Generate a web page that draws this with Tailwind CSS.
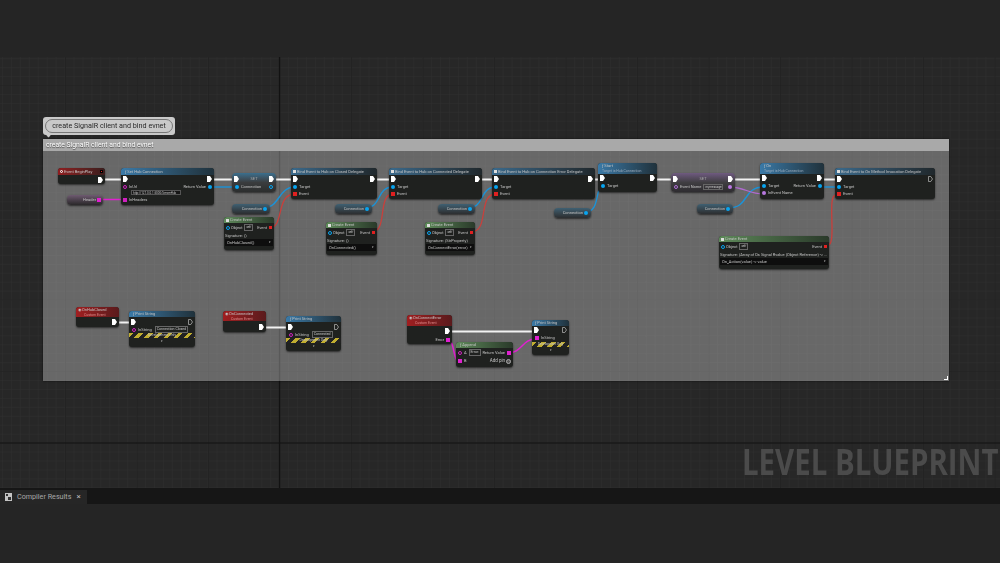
<!DOCTYPE html>
<html lang="en">
	<head>
		<meta charset="UTF-8" />
		<title>Level Blueprint</title>
		<script src="https://cdn.jsdelivr.net/npm/@tailwindcss/browser@4"></script>
	</head>
	<body class="w-[1000px] h-[563px] overflow-hidden bg-[#252525] font-['Roboto',sans-serif] flex flex-col">
		<div class="h-[57px] bg-[#252525]"></div>

		<!-- graph canvas, node coordinates are y-57 from the screenshot -->
		<div class="relative h-[431px] overflow-hidden bg-[#272727] blur-[0.5px]">
			<svg class="absolute inset-0 w-full h-full" viewBox="0 57 1000 431">
				<defs>
					<pattern id="minor" x="2" y="13.5" width="8.94" height="8.94" patternUnits="userSpaceOnUse">
						<path d="M0 0V8.94M0 0H8.94" stroke="#303030" stroke-width="1" fill="none" />
					</pattern>
					<pattern id="major" x="65" y="85" width="71.5" height="71.5" patternUnits="userSpaceOnUse">
						<path d="M0 0V71.5M0 0H71.5" stroke="#1d1d1d" stroke-width="1.2" fill="none" />
					</pattern>
				</defs>
				<rect x="0" y="57" width="1000" height="431" fill="url(#minor)" />
				<rect x="0" y="57" width="1000" height="431" fill="url(#major)" />
				<path d="M279.5 57V488M0 443H1000" stroke="#121212" stroke-width="1.2" />
			</svg>

			<div class="absolute left-[742px] top-[385px] origin-left scale-x-[0.84] whitespace-nowrap font-['Open_Sans',sans-serif] font-bold text-[35px] leading-[40px] text-[#4b4b4b]">LEVEL BLUEPRINT</div>

			<!-- comment -->
			<div class="absolute left-[43px] top-[60px] w-[132px] h-[18px] rounded-[3px] bg-[#c9c9c9] p-[2px]">
				<div class="h-full rounded-full border border-[#777] flex items-center justify-center text-[7.2px] text-[#2a2a2a]">create SignalR client and bind evnet</div>
				<div class="absolute left-[4px] -bottom-[2px] w-[3px] h-[3px] rotate-45 bg-[#c9c9c9]"></div>
			</div>
			<div class="absolute left-[43px] top-[82px] w-[906px] h-[242px] bg-white/30 shadow-[0_0_2px_#000a]">
				<div class="h-[12px] bg-[#a9a9a9] px-[3px] text-[6.8px] leading-[12px] text-white [text-shadow:0_1px_1px_#444]">create SignalR client and bind evnet</div>
				<div class="absolute right-[1px] bottom-[1px] w-[4px] h-[4px] border-r border-b border-white"></div>
			</div>

			<!-- wires -->
			<svg class="absolute inset-0 w-full h-full" viewBox="0 57 1000 431" fill="none">
				<g stroke="#f2f2f2" stroke-width="1.8">
					<path d="M104 179.5H122M214 179.5H233M275 179.5H292M376 179.5H390M481 179.5H493M594 179.5H599M656 179.5H672M734 179.5H761M823 179.5H836" />
					<path d="M118 322.5H130M265 327.5H287M451 331.5H533" />
				</g>
				<g stroke="#1b93d8" stroke-width="1.4">
					<path d="M209 187H238" />
					<path d="M263 208C280 208 278 187 295 187" />
					<path d="M365 208C382 208 376 187 393 187" />
					<path d="M468 208C485 208 479 187 496 187" />
					<path d="M585 212C601 212 594 187 603 187" />
					<path d="M728 208C750 208 742 187 764 187" />
					<path d="M818 187H840" />
				</g>
				<g stroke="#c8403c" stroke-width="1.3">
					<path d="M269 228C285 228 275 194 295 194" />
					<path d="M372 232C388 232 377 194 393 194" />
					<path d="M471 232C490 232 477 194 496 194" />
					<path d="M827 246C838 246 826 195 836 195" />
				</g>
				<g stroke="#e020d0" stroke-width="1.5">
					<path d="M98 199.5H122" />
					<path d="M447 340C456 340 452 362 460 362" />
					<path d="M508 353C522 353 522 339 536 339" />
				</g>
				<path d="M729 187C745 187 748 194 764 194" stroke="#b06ad0" stroke-width="1.3" />
			</svg>

			<!-- Event BeginPlay -->
			<div class="absolute left-[58px] top-[111px] w-[47px] h-[16px] rounded-[3px] bg-[#1f211f] shadow-[0_1px_2px_#0009] overflow-hidden text-[4px] text-[#c4c4c4]">
				<div class="h-[7px] flex items-center justify-between px-[2px] bg-linear-to-r from-[#8f1d20] to-[#3a1d1d]"><span class="flex items-center gap-[1px]"><span class="w-[3px] h-[3px] rounded-full border border-white"></span>Event BeginPlay</span><span class="w-[3px] h-[3px] bg-[#e02020] border-[0.5px] border-black"></span></div>
				<div class="h-[9px] flex items-center justify-end pr-[2px]"><svg class="w-[5px] h-[6px]" viewBox="0 0 5 6"><path d="M0 0h3l2 3-2 3H0z" fill="#fff" /></svg></div>
			</div>

			<!-- Headers getter -->
			<div class="absolute left-[67px] top-[138px] w-[36px] h-[10px] rounded-[4px] bg-linear-to-b from-[#6e5a70] to-[#2a282a] shadow-[0_1px_2px_#0009] flex items-center justify-end gap-[1px] pr-[2px] text-[4px] text-[#c4c4c4]">Header<span class="w-[4px] h-[4px] bg-[#e020d0]"></span></div>

			<!-- Set Hub Connection -->
			<div class="absolute left-[121px] top-[111px] w-[93px] h-[37px] rounded-[3px] bg-[#1f211f] shadow-[0_1px_2px_#0009] overflow-hidden text-[4px] text-[#c4c4c4]">
				<div class="h-[7px] flex items-center px-[4px] bg-linear-to-r from-[#3a7aa8] to-[#20323c]">ƒ Set Hub Connection</div>
				<div class="h-[8px] flex items-center justify-between px-[2px]"><svg class="w-[5px] h-[6px]" viewBox="0 0 5 6"><path d="M0 0h3l2 3-2 3H0z" fill="#fff" /></svg><svg class="w-[5px] h-[6px]" viewBox="0 0 5 6"><path d="M0 0h3l2 3-2 3H0z" fill="#fff" /></svg></div>
				<div class="h-[14px] flex justify-between px-[2px]">
					<div class="flex flex-col pt-[1px]">
						<div class="flex items-center gap-[2px]"><span class="w-[4px] h-[4px] rounded-full border border-[#d020c0]"></span>InUrl</div>
						<div class="ml-[8px] w-[50px] h-[5px] border-[0.5px] border-[#555] bg-[#161616] text-[3px] leading-[4px] px-[1px] whitespace-nowrap">http://127.0.0.1:5000/ServerHub</div>
					</div>
					<div class="flex items-center gap-[2px] self-start pt-[1px]">Return Value<span class="w-[4px] h-[4px] rounded-full bg-[#08a4f0]"></span></div>
				</div>
				<div class="flex items-center gap-[2px] px-[2px]"><span class="w-[4px] h-[4px] bg-[#d020c0]"></span>InHeaders</div>
			</div>

			<!-- SET Connection -->
			<div class="absolute left-[232px] top-[116px] w-[44px] h-[19px] rounded-[4px] bg-linear-to-b from-[#3a6f8e] via-[#3a3c3e] to-[#2c2e2e] shadow-[0_1px_2px_#0009] overflow-hidden text-[4px] text-[#c4c4c4]">
				<div class="h-[10px] flex items-center justify-between px-[2px] pt-[2px]"><svg class="w-[5px] h-[6px]" viewBox="0 0 5 6"><path d="M0 0h3l2 3-2 3H0z" fill="#fff" /></svg><span class="text-[#aaa]">SET</span><svg class="w-[5px] h-[6px]" viewBox="0 0 5 6"><path d="M0 0h3l2 3-2 3H0z" fill="#fff" /></svg></div>
				<div class="h-[7px] flex items-center justify-between px-[3px]"><span class="flex items-center gap-[2px]"><span class="w-[4px] h-[4px] rounded-full bg-[#08a4f0]"></span>Connection</span><span class="w-[4px] h-[4px] rounded-full border border-[#08a4f0]"></span></div>
			</div>

			<!-- Connection getters -->
			<div class="absolute left-[232px] top-[147px] w-[38px] h-[10px] rounded-[4px] bg-linear-to-b from-[#3f6072] to-[#2c2e30] shadow-[0_1px_2px_#0009] flex items-center justify-end gap-[1px] pr-[3px] text-[4px] text-[#c4c4c4]">Connection<span class="w-[4px] h-[4px] rounded-full bg-[#08a4f0]"></span></div>
			<div class="absolute left-[335px] top-[147px] w-[37px] h-[10px] rounded-[4px] bg-linear-to-b from-[#3f6072] to-[#2c2e30] shadow-[0_1px_2px_#0009] flex items-center justify-end gap-[1px] pr-[3px] text-[4px] text-[#c4c4c4]">Connection<span class="w-[4px] h-[4px] rounded-full bg-[#08a4f0]"></span></div>
			<div class="absolute left-[438px] top-[147px] w-[37px] h-[10px] rounded-[4px] bg-linear-to-b from-[#3f6072] to-[#2c2e30] shadow-[0_1px_2px_#0009] flex items-center justify-end gap-[1px] pr-[3px] text-[4px] text-[#c4c4c4]">Connection<span class="w-[4px] h-[4px] rounded-full bg-[#08a4f0]"></span></div>
			<div class="absolute left-[554px] top-[151px] w-[37px] h-[10px] rounded-[4px] bg-linear-to-b from-[#3f6072] to-[#2c2e30] shadow-[0_1px_2px_#0009] flex items-center justify-end gap-[1px] pr-[3px] text-[4px] text-[#c4c4c4]">Connection<span class="w-[4px] h-[4px] rounded-full bg-[#08a4f0]"></span></div>
			<div class="absolute left-[697px] top-[147px] w-[36px] h-[10px] rounded-[4px] bg-linear-to-b from-[#3f6072] to-[#2c2e30] shadow-[0_1px_2px_#0009] flex items-center justify-end gap-[1px] pr-[3px] text-[4px] text-[#c4c4c4]">Connection<span class="w-[4px] h-[4px] rounded-full bg-[#08a4f0]"></span></div>

			<!-- Bind Event nodes -->
			<div class="absolute left-[291px] top-[111px] w-[86px] h-[31px] rounded-[3px] bg-[#1f211f] shadow-[0_1px_2px_#0009] overflow-hidden text-[4px] text-[#c4c4c4]">
				<div class="h-[7px] flex items-center px-[2px] gap-[1px] bg-linear-to-r from-[#3a6a8c] to-[#20282c]"><span class="w-[3px] h-[3px] bg-[#ddd]"></span>Bind Event to Hub on Closed Delegate</div>
				<div class="h-[8px] flex items-center justify-between px-[2px]"><svg class="w-[5px] h-[6px]" viewBox="0 0 5 6"><path d="M0 0h3l2 3-2 3H0z" fill="#fff" /></svg><svg class="w-[5px] h-[6px]" viewBox="0 0 5 6"><path d="M0 0h3l2 3-2 3H0z" fill="#fff" /></svg></div>
				<div class="h-[8px] flex items-center gap-[2px] px-[2px]"><span class="w-[4px] h-[4px] rounded-full bg-[#08a4f0]"></span>Target</div>
				<div class="h-[6px] flex items-center gap-[2px] px-[2px]"><span class="w-[4px] h-[4px] bg-[#e02020]"></span>Event</div>
			</div>
			<div class="absolute left-[389px] top-[111px] w-[93px] h-[31px] rounded-[3px] bg-[#1f211f] shadow-[0_1px_2px_#0009] overflow-hidden text-[4px] text-[#c4c4c4]">
				<div class="h-[7px] flex items-center px-[2px] gap-[1px] bg-linear-to-r from-[#3a6a8c] to-[#20282c]"><span class="w-[3px] h-[3px] bg-[#ddd]"></span>Bind Event to Hub on Connected Delegate</div>
				<div class="h-[8px] flex items-center justify-between px-[2px]"><svg class="w-[5px] h-[6px]" viewBox="0 0 5 6"><path d="M0 0h3l2 3-2 3H0z" fill="#fff" /></svg><svg class="w-[5px] h-[6px]" viewBox="0 0 5 6"><path d="M0 0h3l2 3-2 3H0z" fill="#fff" /></svg></div>
				<div class="h-[8px] flex items-center gap-[2px] px-[2px]"><span class="w-[4px] h-[4px] rounded-full bg-[#08a4f0]"></span>Target</div>
				<div class="h-[6px] flex items-center gap-[2px] px-[2px]"><span class="w-[4px] h-[4px] bg-[#e02020]"></span>Event</div>
			</div>
			<div class="absolute left-[492px] top-[111px] w-[103px] h-[31px] rounded-[3px] bg-[#1f211f] shadow-[0_1px_2px_#0009] overflow-hidden text-[4px] text-[#c4c4c4]">
				<div class="h-[7px] flex items-center px-[2px] gap-[1px] bg-linear-to-r from-[#3a6a8c] to-[#20282c]"><span class="w-[3px] h-[3px] bg-[#ddd]"></span>Bind Event to Hub on Connection Error Delegate</div>
				<div class="h-[8px] flex items-center justify-between px-[2px]"><svg class="w-[5px] h-[6px]" viewBox="0 0 5 6"><path d="M0 0h3l2 3-2 3H0z" fill="#fff" /></svg><svg class="w-[5px] h-[6px]" viewBox="0 0 5 6"><path d="M0 0h3l2 3-2 3H0z" fill="#fff" /></svg></div>
				<div class="h-[8px] flex items-center gap-[2px] px-[2px]"><span class="w-[4px] h-[4px] rounded-full bg-[#08a4f0]"></span>Target</div>
				<div class="h-[6px] flex items-center gap-[2px] px-[2px]"><span class="w-[4px] h-[4px] bg-[#e02020]"></span>Event</div>
			</div>
			<div class="absolute left-[835px] top-[111px] w-[100px] h-[31px] rounded-[3px] bg-[#1f211f] shadow-[0_1px_2px_#0009] overflow-hidden text-[4px] text-[#c4c4c4]">
				<div class="h-[7px] flex items-center px-[2px] gap-[1px] bg-linear-to-r from-[#3a6a8c] to-[#20282c]"><span class="w-[3px] h-[3px] bg-[#ddd]"></span>Bind Event to On Method Invocation Delegate</div>
				<div class="h-[8px] flex items-center justify-between px-[2px]"><svg class="w-[5px] h-[6px]" viewBox="0 0 5 6"><path d="M0 0h3l2 3-2 3H0z" fill="#fff" /></svg><svg class="w-[5px] h-[6px]" viewBox="0 0 5 6"><path d="M.5.5h2.3l1.7 2.5-1.7 2.5H.5z" fill="none" stroke="#bbb" stroke-width=".7" /></svg></div>
				<div class="h-[8px] flex items-center gap-[2px] px-[2px]"><span class="w-[4px] h-[4px] rounded-full bg-[#08a4f0]"></span>Target</div>
				<div class="h-[6px] flex items-center gap-[2px] px-[2px]"><span class="w-[4px] h-[4px] bg-[#e02020]"></span>Event</div>
			</div>

			<!-- Start -->
			<div class="absolute left-[598px] top-[106px] w-[59px] h-[29px] rounded-[3px] bg-[#1f211f] shadow-[0_1px_2px_#0009] overflow-hidden text-[4px] text-[#c4c4c4]">
				<div class="h-[11px] px-[4px] leading-[4.5px] pt-[1px] bg-linear-to-r from-[#3a7aa8] to-[#20323c]">ƒ Start<br /><span class="text-[3.5px] text-[#9ab]">Target is Hub Connection</span></div>
				<div class="h-[8px] flex items-center justify-between px-[2px]"><svg class="w-[5px] h-[6px]" viewBox="0 0 5 6"><path d="M0 0h3l2 3-2 3H0z" fill="#fff" /></svg><svg class="w-[5px] h-[6px]" viewBox="0 0 5 6"><path d="M0 0h3l2 3-2 3H0z" fill="#fff" /></svg></div>
				<div class="h-[7px] flex items-center gap-[2px] px-[3px]"><span class="w-[4px] h-[4px] rounded-full bg-[#08a4f0]"></span>Target</div>
			</div>

			<!-- SET event name -->
			<div class="absolute left-[671px] top-[116px] w-[64px] h-[19px] rounded-[4px] bg-linear-to-b from-[#6f5a80] via-[#403e42] to-[#2e2c30] shadow-[0_1px_2px_#0009] overflow-hidden text-[4px] text-[#c4c4c4]">
				<div class="h-[10px] flex items-center justify-between px-[2px] pt-[2px]"><svg class="w-[5px] h-[6px]" viewBox="0 0 5 6"><path d="M0 0h3l2 3-2 3H0z" fill="#fff" /></svg><span class="text-[#aaa]">SET</span><svg class="w-[5px] h-[6px]" viewBox="0 0 5 6"><path d="M0 0h3l2 3-2 3H0z" fill="#fff" /></svg></div>
				<div class="h-[7px] flex items-center justify-between px-[3px]"><span class="flex items-center gap-[2px]"><span class="w-[4px] h-[4px] rounded-full border border-[#b070d8]"></span>Event Name<span class="w-[20px] h-[6px] border-[0.5px] border-[#666] text-[3px] leading-[5px] px-[1px]">mymessage</span></span><span class="w-[4px] h-[4px] rounded-full bg-[#b878e0]"></span></div>
			</div>

			<!-- On -->
			<div class="absolute left-[760px] top-[106px] w-[64px] h-[36px] rounded-[3px] bg-[#1f211f] shadow-[0_1px_2px_#0009] overflow-hidden text-[4px] text-[#c4c4c4]">
				<div class="h-[11px] px-[4px] leading-[4.5px] pt-[1px] bg-linear-to-r from-[#3a7aa8] to-[#20323c]">ƒ On<br /><span class="text-[3.5px] text-[#9ab]">Target is Hub Connection</span></div>
				<div class="h-[8px] flex items-center justify-between px-[2px]"><svg class="w-[5px] h-[6px]" viewBox="0 0 5 6"><path d="M0 0h3l2 3-2 3H0z" fill="#fff" /></svg><svg class="w-[5px] h-[6px]" viewBox="0 0 5 6"><path d="M0 0h3l2 3-2 3H0z" fill="#fff" /></svg></div>
				<div class="h-[8px] flex items-center justify-between px-[2px]"><span class="flex items-center gap-[2px]"><span class="w-[4px] h-[4px] rounded-full bg-[#08a4f0]"></span>Target</span><span class="flex items-center gap-[2px]">Return Value<span class="w-[4px] h-[4px] rounded-full bg-[#08a4f0]"></span></span></div>
				<div class="h-[6px] flex items-center gap-[2px] px-[2px]"><span class="w-[4px] h-[4px] rounded-full bg-[#b878e0]"></span>InEvent Name</div>
			</div>

			<!-- Create Event nodes -->
			<div class="absolute left-[224px] top-[160px] w-[50px] h-[33px] rounded-[3px] bg-[#1f211f] shadow-[0_1px_2px_#0009] overflow-hidden text-[4px] text-[#c4c4c4]">
				<div class="h-[6px] flex items-center gap-[1px] px-[2px] bg-linear-to-r from-[#5e8a5a] to-[#2a3a2a]"><span class="w-[3px] h-[3px] bg-[#ddd]"></span>Create Event</div>
				<div class="h-[9px] flex items-center justify-between px-[2px]"><span class="flex items-center gap-[1px]"><span class="w-[4px] h-[4px] rounded-full border border-[#08a4f0]"></span>Object<span class="ml-[1px] px-[1px] border-[0.5px] border-[#666] text-[3px]">self</span></span><span class="flex items-center gap-[2px]">Event<span class="w-[3px] h-[3px] bg-[#e02020]"></span></span></div>
				<div class="h-[7px] flex items-center px-[1px]">Signature: ()</div>
				<div class="mx-[1px] h-[7px] flex items-center justify-between px-[2px] bg-[#0e0e0e]">OnHubClosed()<span class="text-[3px]">▾</span></div>
			</div>
			<div class="absolute left-[326px] top-[165px] w-[51px] h-[33px] rounded-[3px] bg-[#1f211f] shadow-[0_1px_2px_#0009] overflow-hidden text-[4px] text-[#c4c4c4]">
				<div class="h-[6px] flex items-center gap-[1px] px-[2px] bg-linear-to-r from-[#5e8a5a] to-[#2a3a2a]"><span class="w-[3px] h-[3px] bg-[#ddd]"></span>Create Event</div>
				<div class="h-[9px] flex items-center justify-between px-[2px]"><span class="flex items-center gap-[1px]"><span class="w-[4px] h-[4px] rounded-full border border-[#08a4f0]"></span>Object<span class="ml-[1px] px-[1px] border-[0.5px] border-[#666] text-[3px]">self</span></span><span class="flex items-center gap-[2px]">Event<span class="w-[3px] h-[3px] bg-[#e02020]"></span></span></div>
				<div class="h-[7px] flex items-center px-[1px]">Signature: ()</div>
				<div class="mx-[1px] h-[7px] flex items-center justify-between px-[2px] bg-[#0e0e0e]">OnConnected()<span class="text-[3px]">▾</span></div>
			</div>
			<div class="absolute left-[425px] top-[165px] w-[50px] h-[33px] rounded-[3px] bg-[#1f211f] shadow-[0_1px_2px_#0009] overflow-hidden text-[4px] text-[#c4c4c4]">
				<div class="h-[6px] flex items-center gap-[1px] px-[2px] bg-linear-to-r from-[#5e8a5a] to-[#2a3a2a]"><span class="w-[3px] h-[3px] bg-[#ddd]"></span>Create Event</div>
				<div class="h-[9px] flex items-center justify-between px-[2px]"><span class="flex items-center gap-[1px]"><span class="w-[4px] h-[4px] rounded-full border border-[#08a4f0]"></span>Object<span class="ml-[1px] px-[1px] border-[0.5px] border-[#666] text-[3px]">self</span></span><span class="flex items-center gap-[2px]">Event<span class="w-[3px] h-[3px] bg-[#e02020]"></span></span></div>
				<div class="h-[7px] flex items-center px-[1px]">Signature: (StrProperty)</div>
				<div class="mx-[1px] h-[7px] flex items-center justify-between px-[2px] bg-[#0e0e0e] whitespace-nowrap">OnConnectError(error)<span class="text-[3px]">▾</span></div>
			</div>
			<div class="absolute left-[719px] top-[179px] w-[110px] h-[33px] rounded-[3px] bg-[#1f211f] shadow-[0_1px_2px_#0009] overflow-hidden text-[4px] text-[#c4c4c4]">
				<div class="h-[6px] flex items-center gap-[1px] px-[2px] bg-linear-to-r from-[#5e8a5a] to-[#2a3a2a]"><span class="w-[3px] h-[3px] bg-[#ddd]"></span>Create Event</div>
				<div class="h-[9px] flex items-center justify-between px-[2px]"><span class="flex items-center gap-[1px]"><span class="w-[4px] h-[4px] rounded-full border border-[#08a4f0]"></span>Object<span class="ml-[1px] px-[1px] border-[0.5px] border-[#666] text-[3px]">self</span></span><span class="flex items-center gap-[2px]">Event<span class="w-[3px] h-[3px] bg-[#e02020]"></span></span></div>
				<div class="h-[7px] flex items-center px-[1px] whitespace-nowrap">Signature: (Array of Ds Signal Rvalue (Object Reference) -&gt; ...</div>
				<div class="mx-[1px] h-[7px] flex items-center justify-between px-[2px] bg-[#0e0e0e]">On_Action(value) -&gt; value<span class="text-[3px]">▾</span></div>
			</div>

			<!-- custom events -->
			<div class="absolute left-[76px] top-[250px] w-[43px] h-[20px] rounded-[3px] bg-[#1f211f] shadow-[0_1px_2px_#0009] overflow-hidden text-[4px] text-[#c4c4c4]">
				<div class="h-[10px] px-[2px] leading-[4.5px] pt-[1px] bg-linear-to-r from-[#a01e20] to-[#5a1a1c]">◉ OnHubClosed<br /><span class="ml-[6px] text-[3.5px] text-[#d88]">Custom Event</span></div>
				<div class="h-[10px] flex items-center justify-end pr-[2px]"><svg class="w-[5px] h-[6px]" viewBox="0 0 5 6"><path d="M0 0h3l2 3-2 3H0z" fill="#fff" /></svg></div>
			</div>
			<div class="absolute left-[223px] top-[254px] w-[43px] h-[21px] rounded-[3px] bg-[#1f211f] shadow-[0_1px_2px_#0009] overflow-hidden text-[4px] text-[#c4c4c4]">
				<div class="h-[10px] px-[2px] leading-[4.5px] pt-[1px] bg-linear-to-r from-[#a01e20] to-[#5a1a1c]">◉ OnConnected<br /><span class="ml-[6px] text-[3.5px] text-[#d88]">Custom Event</span></div>
				<div class="h-[11px] flex items-center justify-end pr-[2px]"><svg class="w-[5px] h-[6px]" viewBox="0 0 5 6"><path d="M0 0h3l2 3-2 3H0z" fill="#fff" /></svg></div>
			</div>
			<div class="absolute left-[407px] top-[258px] w-[45px] h-[29px] rounded-[3px] bg-[#1f211f] shadow-[0_1px_2px_#0009] overflow-hidden text-[4px] text-[#c4c4c4]">
				<div class="h-[11px] px-[2px] leading-[4.5px] pt-[1px] bg-linear-to-r from-[#a01e20] to-[#5a1a1c]">◉ OnConnectError<br /><span class="ml-[6px] text-[3.5px] text-[#d88]">Custom Event</span></div>
				<div class="h-[10px] flex items-center justify-end pr-[2px]"><svg class="w-[5px] h-[6px]" viewBox="0 0 5 6"><path d="M0 0h3l2 3-2 3H0z" fill="#fff" /></svg></div>
				<div class="h-[7px] flex items-center justify-end gap-[2px] pr-[2px]">Error<span class="w-[4px] h-[4px] bg-[#e020d0]"></span></div>
			</div>

			<!-- Print String nodes -->
			<div class="absolute left-[129px] top-[254px] w-[66px] h-[36px] rounded-[3px] bg-[#1f211f] shadow-[0_1px_2px_#0009] overflow-hidden text-[4px] text-[#c4c4c4]">
				<div class="h-[6px] flex items-center px-[4px] bg-linear-to-r from-[#3a7aa8] to-[#20323c]">ƒ Print String</div>
				<div class="h-[9px] flex items-center justify-between px-[2px]"><svg class="w-[5px] h-[6px]" viewBox="0 0 5 6"><path d="M0 0h3l2 3-2 3H0z" fill="#fff" /></svg><svg class="w-[5px] h-[6px]" viewBox="0 0 5 6"><path d="M.5.5h2.3l1.7 2.5-1.7 2.5H.5z" fill="none" stroke="#bbb" stroke-width=".7" /></svg></div>
				<div class="h-[7px] flex items-center gap-[2px] px-[3px]"><span class="w-[4px] h-[4px] rounded-full border border-[#d020c0]"></span>InString<span class="ml-[1px] px-[1px] border-[0.5px] border-[#666] text-[3.5px]">Connection Closed</span></div>
				<div class="h-[5px] flex items-center justify-center text-[3.5px] bg-[repeating-linear-gradient(135deg,#c0ad30_0_3px,#222_3px_7px)]">Development Only</div>
				<div class="text-center text-[3px] leading-[6px]">▾</div>
			</div>
			<div class="absolute left-[286px] top-[259px] w-[55px] h-[35px] rounded-[3px] bg-[#1f211f] shadow-[0_1px_2px_#0009] overflow-hidden text-[4px] text-[#c4c4c4]">
				<div class="h-[6px] flex items-center px-[4px] bg-linear-to-r from-[#3a7aa8] to-[#20323c]">ƒ Print String</div>
				<div class="h-[9px] flex items-center justify-between px-[2px]"><svg class="w-[5px] h-[6px]" viewBox="0 0 5 6"><path d="M0 0h3l2 3-2 3H0z" fill="#fff" /></svg><svg class="w-[5px] h-[6px]" viewBox="0 0 5 6"><path d="M.5.5h2.3l1.7 2.5-1.7 2.5H.5z" fill="none" stroke="#bbb" stroke-width=".7" /></svg></div>
				<div class="h-[7px] flex items-center gap-[2px] px-[3px]"><span class="w-[4px] h-[4px] rounded-full border border-[#d020c0]"></span>InString<span class="ml-[1px] px-[1px] border-[0.5px] border-[#666] text-[3.5px]">Connected</span></div>
				<div class="h-[5px] flex items-center justify-center text-[3.5px] bg-[repeating-linear-gradient(135deg,#c0ad30_0_3px,#222_3px_7px)]">Development Only</div>
				<div class="text-center text-[3px] leading-[6px]">▾</div>
			</div>
			<div class="absolute left-[532px] top-[263px] w-[37px] h-[35px] rounded-[3px] bg-[#1f211f] shadow-[0_1px_2px_#0009] overflow-hidden text-[4px] text-[#c4c4c4]">
				<div class="h-[6px] flex items-center px-[3px] bg-linear-to-r from-[#3a7aa8] to-[#20323c]">ƒ Print String</div>
				<div class="h-[8px] flex items-center justify-between px-[2px]"><svg class="w-[5px] h-[6px]" viewBox="0 0 5 6"><path d="M0 0h3l2 3-2 3H0z" fill="#fff" /></svg><svg class="w-[5px] h-[6px]" viewBox="0 0 5 6"><path d="M.5.5h2.3l1.7 2.5-1.7 2.5H.5z" fill="none" stroke="#bbb" stroke-width=".7" /></svg></div>
				<div class="h-[8px] flex items-center gap-[2px] px-[3px]"><span class="w-[4px] h-[4px] bg-[#e020d0]"></span>InString</div>
				<div class="h-[5px] flex items-center justify-center text-[3.2px] bg-[repeating-linear-gradient(135deg,#c0ad30_0_3px,#222_3px_7px)]">Development Only</div>
				<div class="text-center text-[3px] leading-[6px]">▾</div>
			</div>

			<!-- Append -->
			<div class="absolute left-[456px] top-[285px] w-[57px] h-[25px] rounded-[3px] bg-[#1f211f] shadow-[0_1px_2px_#0009] overflow-hidden text-[4px] text-[#c4c4c4]">
				<div class="h-[6px] flex items-center px-[4px] bg-linear-to-r from-[#5e8a5a] to-[#2a3a2a]">ƒ Append</div>
				<div class="h-[9px] flex items-center justify-between px-[2px]"><span class="flex items-center gap-[2px]"><span class="w-[4px] h-[4px] rounded-full border border-[#d020c0]"></span>A<span class="px-[1px] border-[0.5px] border-[#666] text-[3.5px]">Error:</span></span><span class="flex items-center gap-[2px]">Return Value<span class="w-[4px] h-[4px] bg-[#e020d0]"></span></span></div>
				<div class="h-[8px] flex items-center justify-between px-[2px]"><span class="flex items-center gap-[2px]"><span class="w-[4px] h-[4px] bg-[#e020d0]"></span>B</span><span class="flex items-center gap-[1px] text-[4.5px]">Add pin<span class="w-[5px] h-[5px] rounded-full border border-[#aaa] bg-[#555]"></span></span></div>
			</div>
		</div>

		<!-- tab well -->
		<div class="h-[16px] bg-[#161616] flex items-end">
			<div class="w-[87px] h-[14px] bg-[#262626] flex items-center gap-[5px] pl-[5px] text-[7.2px] text-[#a8a8a8]">
				<svg class="w-[7px] h-[8px] shrink-0" viewBox="0 0 7 8"><path d="M0 0h7v8H0z" fill="#c4c4c4" /><path d="M1 1h2v2H1zM3 4h3v3H3z" fill="#333" /></svg>
				<span class="whitespace-nowrap">Compiler Results</span>
				<span class="text-[8px] text-[#bbb]">×</span>
			</div>
		</div>
		<div class="flex-1 bg-[#252525]"></div>
	</body>
</html>
